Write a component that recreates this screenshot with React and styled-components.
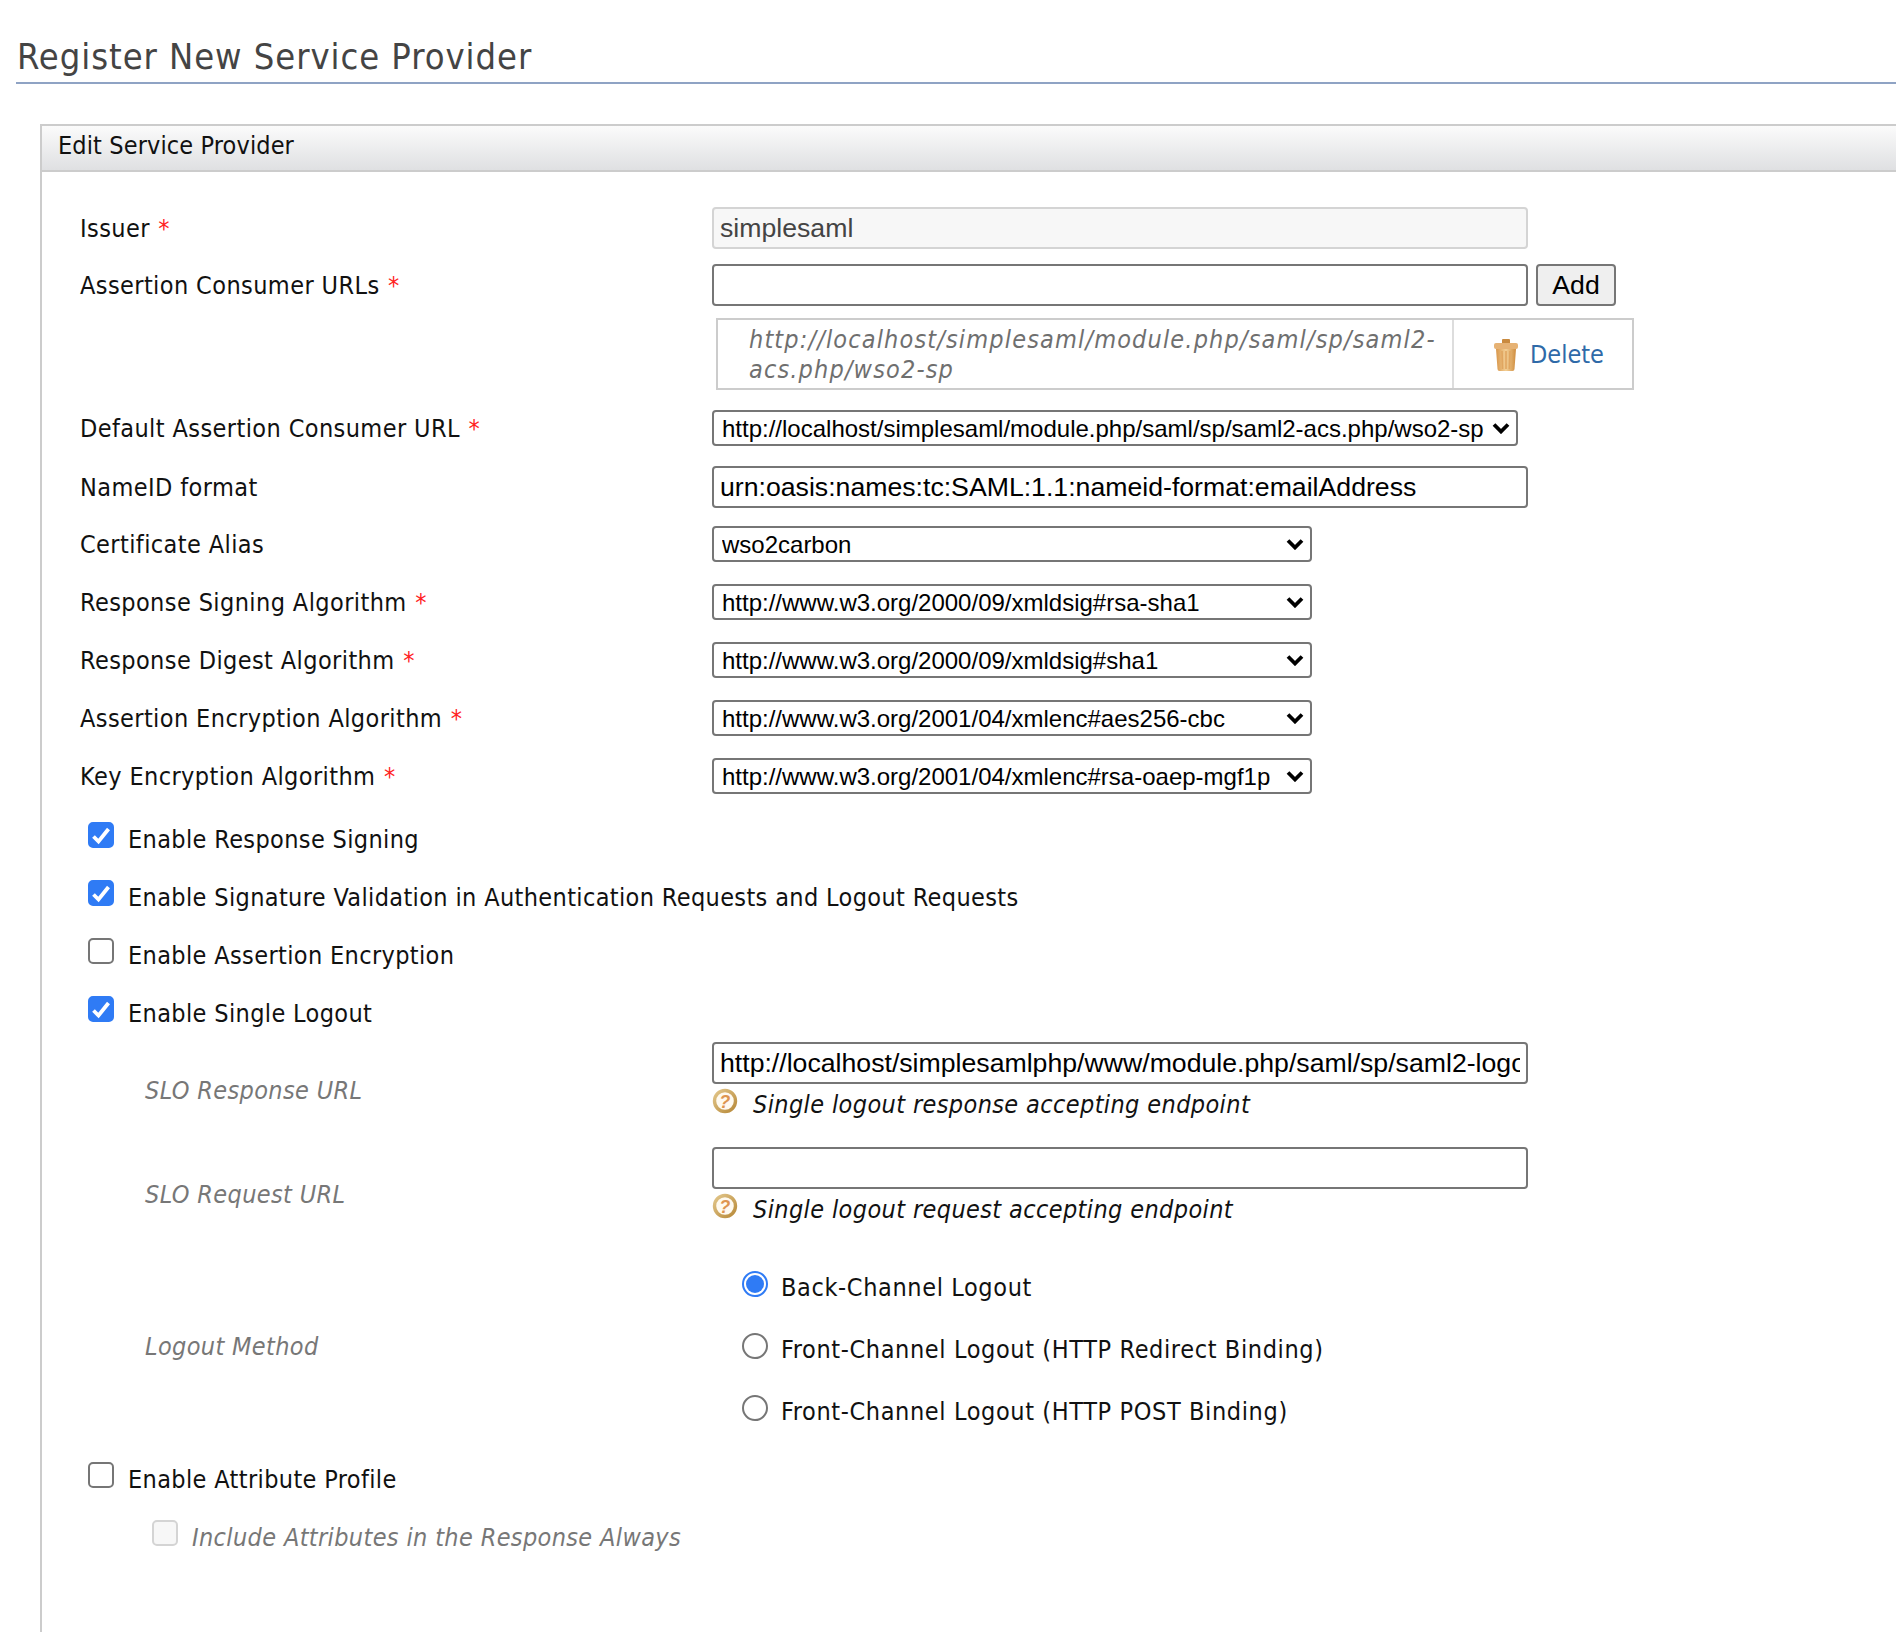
import React from "react";
import styled, { createGlobalStyle } from "styled-components";

const Global = createGlobalStyle`
  html, body { margin: 0; padding: 0; background: #fff; }
  body { font-family: "DejaVu Sans Condensed", "DejaVu Sans", sans-serif; font-stretch: condensed; color: #111; }
  * { box-sizing: border-box; }
`;

const Page = styled.div`
  height: 1632px;
  overflow: hidden;
  padding-top: 31px;
`;
const Title = styled.h2`
  margin: 0 0 40px 16px;
  height: 53px;
  padding-left: 1px;
  font-size: 36px;
  letter-spacing: 0.95px;
  line-height: 51px;
  font-weight: 400;
  color: #444;
  border-bottom: 2px solid #8fa3c4;
`;
const Panel = styled.section`
  margin-left: 40px;
  border-left: 2px solid #ccc;
  border-top: 2px solid #ccc;
  height: 1520px;
`;
const PanelHeader = styled.div`
  height: 46px;
  padding-left: 16px;
  font-size: 25px;
  letter-spacing: 0.12px;
  line-height: 40px;
  color: #111;
  background: linear-gradient(#fbfbfb, #dfe0e2);
  border-bottom: 2px solid #ccc;
`;
const Body = styled.div`
  padding: 35px 0 0 38px;
`;
const Row = styled.div`
  display: grid;
  grid-template-columns: 632px 1fr;
  margin-bottom: ${(p) => p.$gap ?? 15}px;
`;
const Label = styled.label`
  height: ${(p) => p.$h ?? 41}px;
  padding-top: 1px;
  font-size: 25px;
  letter-spacing: 0.4px;
  line-height: ${(p) => p.$h ?? 41}px;
`;
const Req = styled.span`
  color: #f22;
  margin-left: 1px;
`;
const Inline = styled.div`
  display: flex;
  gap: 8px;
`;
const TextInput = styled.input`
  display: block;
  width: 816px;
  height: 42px;
  padding: 0 6px;
  font: 26.67px "Liberation Sans", Arial, sans-serif;
  color: ${(p) => (p.readOnly ? "#444" : "#000")};
  background: ${(p) => (p.readOnly ? "#f7f7f7" : "#fff")};
  border: 2px solid ${(p) => (p.readOnly ? "#d4d4d4" : "#767676")};
  border-radius: 4px;
  outline: none;
`;
const AddButton = styled.button`
  width: 80px;
  height: 42px;
  padding: 0;
  font: 26.67px "Liberation Sans", Arial, sans-serif;
  color: #000;
  background: #efefef;
  border: 2px solid #767676;
  border-radius: 4px;
`;
const UrlTable = styled.div`
  display: grid;
  grid-template-columns: 736px 1fr;
  width: 918px;
  height: 72px;
  margin: 12px 0 0 4px;
  border: 2px solid #ccc;
`;
const UrlCell = styled.div`
  padding: 5px 6px 0 31px;
  font-size: 25px;
  letter-spacing: 1.15px;
  line-height: 30px;
  font-style: italic;
  color: #6f6f6f;
  border-right: 2px solid #ddd;
`;
const DeleteCell = styled.a`
  display: flex;
  align-items: center;
  gap: 11px;
  padding: 1px 0 0 39px;
  font-size: 25px;
  color: #2f6aa8;
`;
const SelectWrap = styled.div`
  position: relative;
  width: ${(p) => p.$w}px;
  height: 36px;
`;
const Select = styled.select`
  appearance: none;
  display: block;
  width: 100%;
  height: 100%;
  padding: 0 30px 0 8px;
  font: 24px "Liberation Sans", Arial, sans-serif;
  color: #000;
  background: #fff;
  border: 2px solid #767676;
  border-radius: 4px;
  outline: none;
`;
const Chevron = styled.svg`
  position: absolute;
  right: 8px;
  top: 12px;
  width: 18px;
  height: 12px;
  pointer-events: none;
`;
const CheckRow = styled.div`
  display: flex;
  align-items: flex-start;
  gap: 14px;
  height: 26px;
  margin-left: ${(p) => p.$left ?? 8}px;
  margin-bottom: ${(p) => p.$after ?? 32}px;
`;
const Box = styled.span`
  flex: none;
  display: flex;
  align-items: center;
  justify-content: center;
  width: 26px;
  height: 26px;
  border-radius: 5px;
  background: ${(p) => (p.$on ? "#2f7bf5" : p.$off ? "#f7f7f7" : "#fff")};
  border: 2px solid ${(p) => (p.$on ? "#2f7bf5" : p.$off ? "#d4d4d4" : "#767676")};
  svg { flex: none; }
`;
const CheckText = styled.span`
  font-size: 25px;
  letter-spacing: ${(p) => (p.$wide ? 0.62 : 0.36)}px;
  line-height: 30px;
  margin-top: ${(p) => (p.$wide ? 2 : 3)}px;
  white-space: nowrap;
  font-style: ${(p) => (p.$muted ? "italic" : "normal")};
  color: ${(p) => (p.$muted ? "#777" : "#111")};
`;
const SubRow = styled.div`
  display: grid;
  grid-template-columns: 567px 1fr;
  margin: 0 0 ${(p) => p.$gap}px 65px;
`;
const SubLabel = styled.span`
  font-size: 25px;
  letter-spacing: 0.36px;
  font-style: italic;
  color: #777;
  align-self: center;
  padding-top: ${(p) => p.$pad ?? 0}px;
`;
const Help = styled.div`
  display: flex;
  align-items: flex-start;
  gap: 15px;
  height: 26px;
  margin-top: 4px;
  font-size: 25px;
  letter-spacing: 0.38px;
  line-height: 30px;
  font-style: italic;
  color: #111;
`;
const HelpText = styled.span`
  margin-top: 2px;
`;
const Radios = styled.div`
  display: flex;
  flex-direction: column;
  gap: 36px;
  margin-left: 30px;
`;
const RadioRow = styled.div`
  display: flex;
  align-items: flex-start;
  gap: 13px;
  height: 26px;
`;
const RadioDot = styled.span`
  flex: none;
  display: flex;
  align-items: center;
  justify-content: center;
  width: 26px;
  height: 26px;
  border-radius: 50%;
  background: #fff;
  border: 2px solid ${(p) => (p.$on ? "#2f7bf5" : "#767676")};
  &::after {
    content: "";
    display: ${(p) => (p.$on ? "block" : "none")};
    width: 18px;
    height: 18px;
    border-radius: 50%;
    background: #2f7bf5;
  }
`;

const TrashIcon = () => (
  <svg width="26" height="32" viewBox="0 0 26 32">
    <defs>
      <linearGradient id="tr" x1="0" x2="1" y1="0" y2="0">
        <stop offset="0" stopColor="#d8964a" />
        <stop offset="0.5" stopColor="#f3cf95" />
        <stop offset="1" stopColor="#cf8c3e" />
      </linearGradient>
    </defs>
    <rect x="9" y="0" width="8" height="5" rx="1" fill="#c98a3f" />
    <rect x="1" y="4" width="24" height="6" rx="2" fill="#e6b274" />
    <path d="M3 10h20l-1.5 20a2 2 0 0 1-2 2h-13a2 2 0 0 1-2-2z" fill="url(#tr)" />
    <path d="M9 12l.6 18M13 12v18M17 12l-.6 18" stroke="#e0a660" strokeWidth="1.6" />
  </svg>
);

const HelpIcon = () => (
  <svg width="26" height="26" viewBox="0 0 26 26">
    <defs>
      <linearGradient id="hp" x1="0" x2="1" y1="0" y2="1">
        <stop offset="0" stopColor="#e2c68a" />
        <stop offset="1" stopColor="#b88a3a" />
      </linearGradient>
    </defs>
    <circle cx="13" cy="13" r="10.5" fill="#fffaf0" stroke="url(#hp)" strokeWidth="3.4" />
    <text x="13" y="20" textAnchor="middle" fontFamily="Liberation Sans" fontWeight="700" fontSize="18" fill="#de9550">?</text>
  </svg>
);

const Check = ({ on, off }) => (
  <Box $on={on} $off={off}>
    {on && (
      <svg width="26" height="26" viewBox="0 0 26 26">
        <path d="M5.5 14.5l5 5L20.5 7" fill="none" stroke="#fff" strokeWidth="3.8" />
      </svg>
    )}
  </Box>
);

const Drop = ({ w, value }) => (
  <SelectWrap $w={w}>
    <Select defaultValue={value}>
      <option>{value}</option>
    </Select>
    <Chevron viewBox="0 0 18 12">
      <path d="M2 2.5l7 7 7-7" fill="none" stroke="#000" strokeWidth="3.8" />
    </Chevron>
  </SelectWrap>
);

const selects = [
  ["Certificate Alias", false, "wso2carbon"],
  ["Response Signing Algorithm", true, "http://www.w3.org/2000/09/xmldsig#rsa-sha1"],
  ["Response Digest Algorithm", true, "http://www.w3.org/2000/09/xmldsig#sha1"],
  ["Assertion Encryption Algorithm", true, "http://www.w3.org/2001/04/xmlenc#aes256-cbc"],
  ["Key Encryption Algorithm", true, "http://www.w3.org/2001/04/xmlenc#rsa-oaep-mgf1p"],
];

const checks = [
  ["Enable Response Signing", true],
  ["Enable Signature Validation in Authentication Requests and Logout Requests", true],
  ["Enable Assertion Encryption", false],
  ["Enable Single Logout", true],
];

const radios = [
  ["Back-Channel Logout", true],
  ["Front-Channel Logout (HTTP Redirect Binding)", false],
  ["Front-Channel Logout (HTTP POST Binding)", false],
];

export default function App() {
  return (
    <Page>
      <Global />
      <Title>Register New Service Provider</Title>
      <Panel>
        <PanelHeader>Edit Service Provider</PanelHeader>
        <Body>
          <Row>
            <Label>Issuer <Req>*</Req></Label>
            <TextInput readOnly defaultValue="simplesaml" />
          </Row>
          <Row $gap={20}>
            <Label>Assertion Consumer URLs <Req>*</Req></Label>
            <div>
              <Inline>
                <TextInput />
                <AddButton>Add</AddButton>
              </Inline>
              <UrlTable>
                <UrlCell>http://localhost/simplesaml/module.php/saml/sp/saml2-acs.php/wso2-sp</UrlCell>
                <DeleteCell><TrashIcon />Delete</DeleteCell>
              </UrlTable>
            </div>
          </Row>
          <Row $gap={20}>
            <Label $h={36}>Default Assertion Consumer URL <Req>*</Req></Label>
            <Drop w={806} value="http://localhost/simplesaml/module.php/saml/sp/saml2-acs.php/wso2-sp" />
          </Row>
          <Row $gap={18}>
            <Label>NameID format</Label>
            <TextInput defaultValue="urn:oasis:names:tc:SAML:1.1:nameid-format:emailAddress" />
          </Row>
          {selects.map(([label, req, value], i) => (
            <Row key={label} $gap={i === 4 ? 28 : 22}>
              <Label $h={36}>{label} {req && <Req>*</Req>}</Label>
              <Drop w={600} value={value} />
            </Row>
          ))}
          {checks.map(([text, on], i) => (
            <CheckRow key={text} $after={i === 3 ? 20 : 32}>
              <Check on={on} />
              <CheckText>{text}</CheckText>
            </CheckRow>
          ))}
          <SubRow $gap={33}>
            <SubLabel $pad={25}>SLO Response URL</SubLabel>
            <div>
              <TextInput defaultValue="http://localhost/simplesamlphp/www/module.php/saml/sp/saml2-logout.php" />
              <Help><HelpIcon /><HelpText>Single logout response accepting endpoint</HelpText></Help>
            </div>
          </SubRow>
          <SubRow $gap={52}>
            <SubLabel $pad={23}>SLO Request URL</SubLabel>
            <div>
              <TextInput />
              <Help><HelpIcon /><HelpText>Single logout request accepting endpoint</HelpText></Help>
            </div>
          </SubRow>
          <SubRow $gap={41}>
            <SubLabel>Logout Method</SubLabel>
            <Radios>
              {radios.map(([text, on]) => (
                <RadioRow key={text}>
                  <RadioDot $on={on} />
                  <CheckText $wide>{text}</CheckText>
                </RadioRow>
              ))}
            </Radios>
          </SubRow>
          <CheckRow>
            <Check />
            <CheckText>Enable Attribute Profile</CheckText>
          </CheckRow>
          <CheckRow $left={72}>
            <Check off />
            <CheckText $muted>Include Attributes in the Response Always</CheckText>
          </CheckRow>
        </Body>
      </Panel>
    </Page>
  );
}
